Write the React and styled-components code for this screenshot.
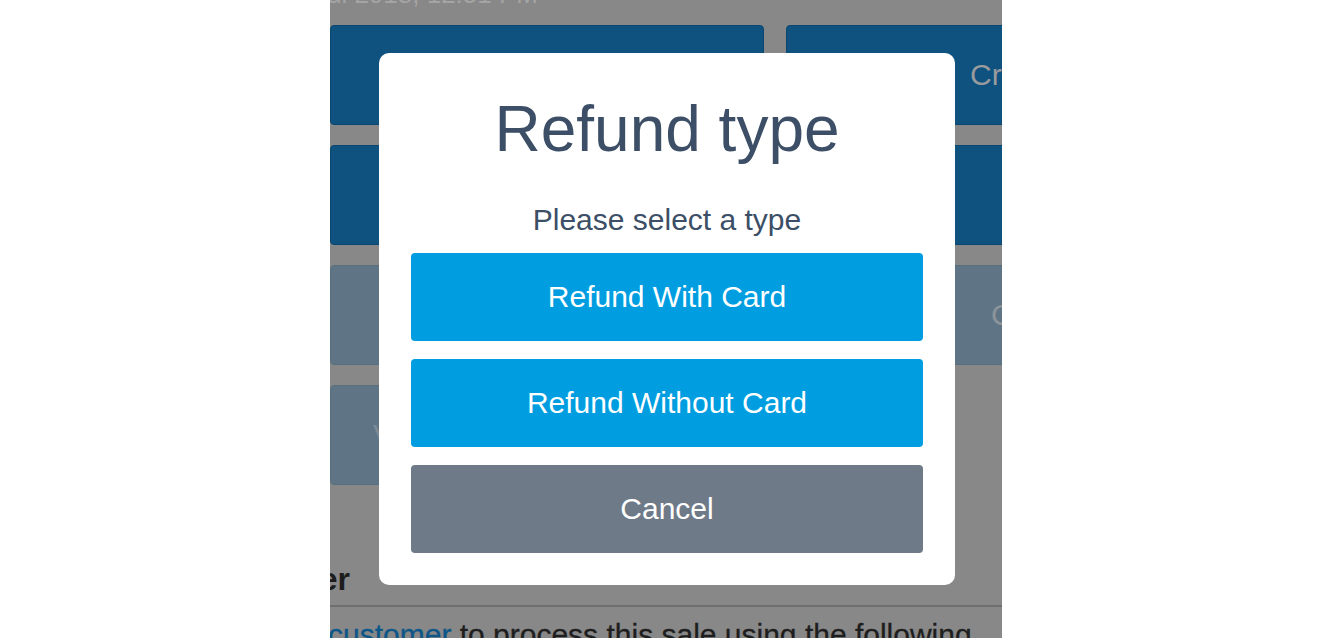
import React from 'react'
import styled, { createGlobalStyle } from 'styled-components'

const GlobalStyle = createGlobalStyle`
	html, body {
		margin: 0;
		padding: 0;
		background: #ffffff;
		font-family: "Liberation Sans", Arial, Helvetica, sans-serif;
	}
`

const App = () => {
	return (
		<>
			<GlobalStyle />
			<Page>
				<Column>
					<Header>
						<DateLine>Jul 2018, 12:51 PM</DateLine>
					</Header>

					<Actions>
						<Action />
						<Action $indent={183} $text="#999b9d">Credit</Action>
						<Action />
						<Action />
						<Action $muted />
						<Action $muted $indent={204} $text="#8d949a">Cash</Action>
						<Action $muted $indent={42} $text="#7e8a95">Void</Action>
					</Actions>

					<SectionTitle>
						<TitleText>Customer</TitleText>
					</SectionTitle>
					<Rule />
					<Note>
						<Link>customer</Link> to process this sale using the following
					</Note>

					<Overlay>
						<Modal>
							<Title>Refund type</Title>
							<Subtitle>Please select a type</Subtitle>
							<Choices>
								<Choice>Refund With Card</Choice>
								<Choice>Refund Without Card</Choice>
								<Choice $cancel>Cancel</Choice>
							</Choices>
						</Modal>
					</Overlay>
				</Column>
			</Page>
		</>
	)
}

const Page = styled.div`
	display: flex;
	justify-content: center;
	height: 638px;
	overflow: hidden;
`

const Column = styled.div`
	position: relative;
	width: 672px;
	height: 638px;
	overflow: hidden;
	background-color: #888888;
`

const Header = styled.div`
	height: 25px;
	overflow: hidden;
	display: flex;
	width: 208px;
	justify-content: flex-end;
`

const DateLine = styled.div`
	flex-shrink: 0;
	margin-top: -19px;
	font-size: 26px;
	line-height: 26px;
	color: #a4a4a4;
	white-space: nowrap;
`

const Actions = styled.div`
	display: grid;
	grid-template-columns: 434px 1fr;
	grid-auto-rows: 100px;
	column-gap: 22px;
	row-gap: 20px;
	margin-right: -24px;
`

const Action = styled.div`
	display: flex;
	align-items: center;
	padding-left: ${(p) => p.$indent || 0}px;
	box-sizing: border-box;
	border-radius: 4px;
	border: 1px solid ${(p) => (p.$muted ? '#5a6f7e' : '#0b4670')};
	background-color: ${(p) => (p.$muted ? '#5f7585' : '#0f5280')};
	color: ${(p) => p.$text || '#9a9c9e'};
	font-size: 30px;
	white-space: nowrap;
	overflow: hidden;
`

const SectionTitle = styled.div`
	display: flex;
	justify-content: flex-end;
	width: 20px;
	margin-top: 74px;
	height: 40px;
`

const TitleText = styled.h2`
	flex-shrink: 0;
	margin: 0;
	font-size: 32px;
	line-height: 40px;
	font-weight: 700;
	color: #1d1d1d;
	white-space: nowrap;
`

const Rule = styled.div`
	height: 2px;
	margin-top: 6px;
	background-color: #6e6e6e;
`

const Note = styled.p`
	margin: 10px 0 0 -2px;
	font-size: 30px;
	line-height: 36px;
	color: #1e1e1e;
	white-space: nowrap;
	-webkit-text-stroke: 0.3px #1e1e1e;
`

const Link = styled.span`
	color: #0d5688;
	-webkit-text-stroke: 0.3px #0d5688;
`

const Overlay = styled.div`
	position: absolute;
	inset: 0;
	display: flex;
	justify-content: flex-start;
	align-items: flex-start;
	padding: 53px 0 0 49px;
`

const Modal = styled.div`
	width: 576px;
	box-sizing: border-box;
	padding: 40px 32px 32px;
	background-color: #ffffff;
	border-radius: 10px;
	text-align: center;
	color: #3c4f66;
`

const Title = styled.h1`
	margin: 0 0 37px;
	font-size: 64px;
	line-height: 72px;
	font-weight: 400;
`

const Subtitle = styled.p`
	margin: 0 0 15px;
	font-size: 30px;
	line-height: 36px;
`

const Choices = styled.div`
	display: flex;
	flex-direction: column;
	gap: 18px;
`

const Choice = styled.div`
	display: flex;
	align-items: center;
	justify-content: center;
	height: 88px;
	border-radius: 4px;
	background-color: ${(p) => (p.$cancel ? '#6e7a88' : '#009ee0')};
	color: #ffffff;
	font-size: 30px;
`

export default App
